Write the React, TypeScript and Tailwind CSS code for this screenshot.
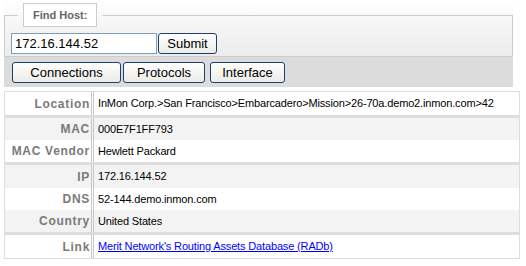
import React from "react";

type Row = { label: string; value: string; link?: boolean; h: string; shade: boolean };

const groups: Row[][] = [
  [
    {
      label: "Location",
      value: "InMon Corp.>San Francisco>Embarcadero>Mission>26-70a.demo2.inmon.com>42",
      h: "h-[23px]",
      shade: false,
    },
  ],
  [
    { label: "MAC", value: "000E7F1FF793", h: "h-[22px]", shade: true },
    { label: "MAC Vendor", value: "Hewlett Packard", h: "h-[22px]", shade: false },
  ],
  [
    { label: "IP", value: "172.16.144.52", h: "h-[23px]", shade: true },
    { label: "DNS", value: "52-144.demo.inmon.com", h: "h-[22px]", shade: false },
    { label: "Country", value: "United States", h: "h-[22px]", shade: true },
  ],
  [
    {
      label: "Link",
      value: "Merit Network's Routing Assets Database (RADb)",
      link: true,
      h: "h-[23px]",
      shade: false,
    },
  ],
];

function XpButton({ children, w }: { children: React.ReactNode; w: string }) {
  return (
    <button
      type="button"
      className={`${w} h-[21px] rounded-[3px] border border-[#1f3f6b] bg-gradient-to-b from-white to-[#ebebe6] text-[13px] leading-none text-black`}
    >
      {children}
    </button>
  );
}

export default function App() {
  return (
    <div className="w-[526px] h-[266px] bg-white font-['Liberation_Sans',Arial,sans-serif] overflow-hidden">
      {/* Find Host panel */}
      <div className="ml-[4px] w-[509px]">
        <div className="bg-gradient-to-b from-white via-[#f4f4f4] to-[#ececec] pt-[3px]">
          <fieldset className="border border-[#cccccc] pl-[6px] pb-[2px]">
            <legend className="ml-[7px]">
              <div className="px-[5px]">
                <span className="block border border-[#cccccc] bg-white px-[9px] h-[24px] leading-[22px] text-[11px] font-bold text-[#666666]">
                  Find Host:
                </span>
              </div>
            </legend>
            <div className="flex items-center gap-[1px] pt-[6px]">
              <input
                defaultValue="172.16.144.52"
                className="w-[146px] h-[21px] border border-[#7f9db9] bg-white px-[3px] text-[13px] text-black outline-none"
              />
              <XpButton w="w-[59px]">Submit</XpButton>
            </div>
          </fieldset>
        </div>
        <div className="h-[30px] bg-[#dcdcdc] flex items-center gap-[2px] pl-[8px]">
          <XpButton w="w-[109px]">Connections</XpButton>
          <XpButton w="w-[82px]">Protocols</XpButton>
          <div className="w-[1px]" />
          <XpButton w="w-[75px]">Interface</XpButton>
        </div>
      </div>

      {/* Host details */}
      <div className="ml-[4px] mt-[4px] w-[516px] border border-[#dddddd]">
        {groups.map((group, gi) => (
          <div key={gi} className={gi > 0 ? "border-t-[3px] border-[#dddddd]" : ""}>
            {group.map((row) => (
              <div
                key={row.label}
                className={`flex ${row.h} ${row.shade ? "bg-[#f3f3f3]" : "bg-white"}`}
              >
                <div className="w-[89px] shrink-0 flex items-center justify-end whitespace-nowrap pr-[1px] text-[12px] font-bold tracking-[0.7px] text-[#7a7a7a] border-r-[3px] border-double border-[#c8c8c8]">
                  {row.label}
                </div>
                <div className="flex items-center pl-[4px] text-[11px] tracking-[-0.15px] text-black whitespace-nowrap">
                  {row.link ? (
                    <a href="#" className="text-[#0000ff] underline">
                      {row.value}
                    </a>
                  ) : (
                    row.value
                  )}
                </div>
              </div>
            ))}
          </div>
        ))}
      </div>
    </div>
  );
}
